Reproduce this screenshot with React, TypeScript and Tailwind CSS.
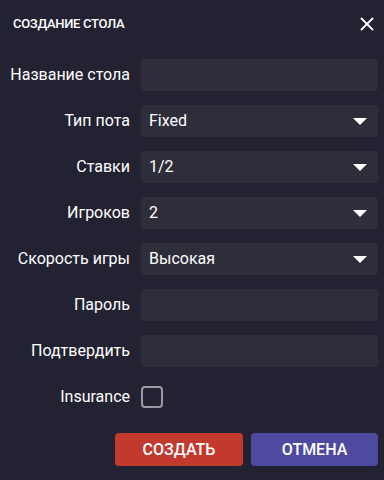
import { X } from 'lucide-react'

const font = { fontFamily: 'Roboto, "Liberation Sans", sans-serif' }

function Caret() {
  return (
    <svg width="14" height="7" viewBox="0 0 14 7" className="shrink-0">
      <path d="M0 0h14L7 7z" fill="#ffffff" />
    </svg>
  )
}

function Row({ label, children }: { label: string; children?: React.ReactNode }) {
  return (
    <div className="flex items-center h-8">
      <div className="w-[130px] shrink-0 text-right text-[16px] text-white">{label}</div>
      <div className="ml-[11px] flex-1">{children}</div>
    </div>
  )
}

function TextField() {
  return <div className="h-8 rounded bg-[#2e2d3a]" />
}

function Select({ value }: { value: string }) {
  return (
    <div className="h-8 rounded bg-[#2e2d3a] flex items-center justify-between pl-[8px] pr-[11px] text-[16px] text-white">
      <span>{value}</span>
      <Caret />
    </div>
  )
}

export default function App() {
  return (
    <div className="w-[384px] h-[480px] bg-[#232232] text-white" style={font}>
      <div className="h-[48px] flex items-center justify-between pl-[13px] pr-[6px]">
        <span className="text-[13px] font-medium tracking-[-0.3px]">СОЗДАНИЕ СТОЛА</span>
        <X size={22} strokeWidth={2} className="text-white" />
      </div>
      <div className="flex flex-col gap-[14px] pr-[6px] pt-[11px]">
        <Row label="Название стола">
          <TextField />
        </Row>
        <Row label="Тип пота">
          <Select value="Fixed" />
        </Row>
        <Row label="Ставки">
          <Select value="1/2" />
        </Row>
        <Row label="Игроков">
          <Select value="2" />
        </Row>
        <Row label="Скорость игры">
          <Select value="Высокая" />
        </Row>
        <Row label="Пароль">
          <TextField />
        </Row>
        <Row label="Подтвердить">
          <TextField />
        </Row>
        <Row label="Insurance">
          <div className="w-[22px] h-[22px] rounded-[4px] border-2 border-[#9a9aa4]" />
        </Row>
      </div>
      <div className="flex justify-end gap-[8px] pr-[6px] mt-[20px]">
        <button className="w-[128px] h-[33px] rounded bg-[#c23a2e] text-[16px] font-medium">СОЗДАТЬ</button>
        <button className="w-[127px] h-[33px] rounded bg-[#4e4aa0] text-[16px] font-medium">ОТМЕНА</button>
      </div>
    </div>
  )
}
